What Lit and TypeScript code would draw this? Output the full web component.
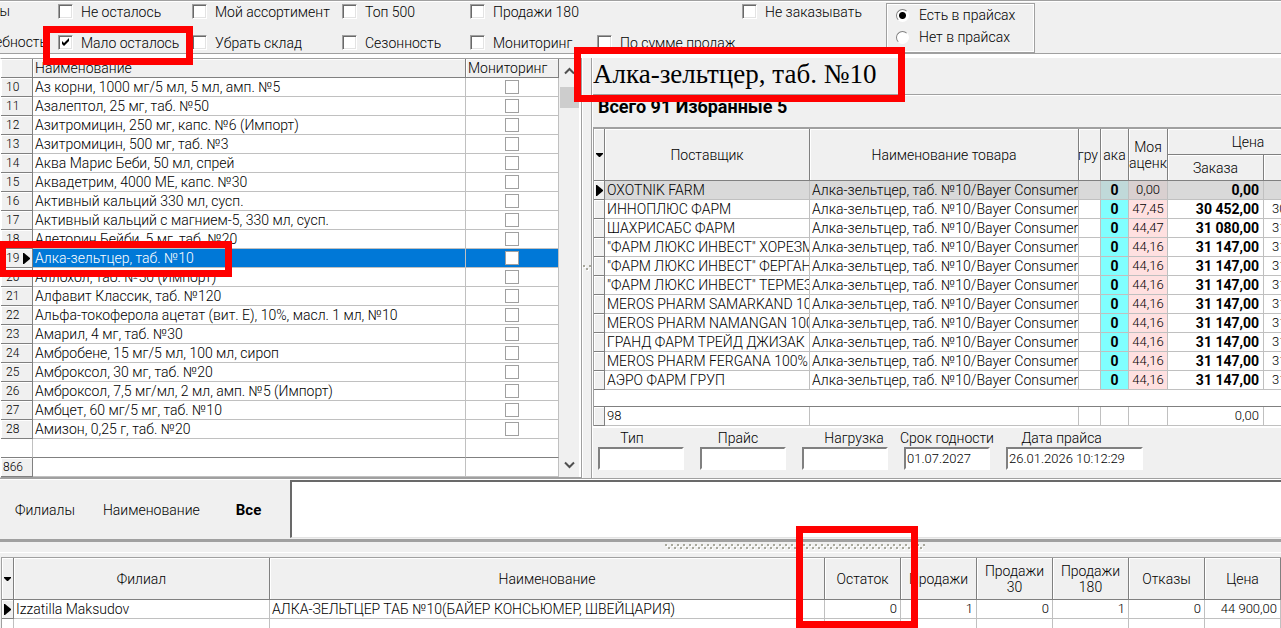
import { LitElement, html, css, svg } from "lit";
import { customElement } from "lit/decorators.js";
import { classMap } from "lit/directives/class-map.js";

const MEDICINES: string[] = [
  "Аз корни, 1000 мг/5 мл, 5 мл, амп. №5",
  "Азалептол, 25 мг, таб. №50",
  "Азитромицин, 250 мг, капс. №6 (Импорт)",
  "Азитромицин, 500 мг, таб. №3",
  "Аква Марис Беби, 50 мл, спрей",
  "Аквадетрим, 4000 МЕ, капс. №30",
  "Активный кальций 330 мл, сусп.",
  "Активный кальций с магнием-5, 330 мл, сусп.",
  "Алеторин Бейби, 5 мг, таб. №20",
  "Алка-зельтцер, таб. №10",
  "Аллохол, таб. №50 (Импорт)",
  "Алфавит Классик, таб. №120",
  "Альфа-токоферола ацетат (вит. Е), 10%, масл. 1 мл, №10",
  "Амарил, 4 мг, таб. №30",
  "Амбробене, 15 мг/5 мл, 100 мл, сироп",
  "Амброксол, 30 мг, таб. №20",
  "Амброксол, 7,5 мг/мл, 2 мл, амп. №5 (Импорт)",
  "Амбцет, 60 мг/5 мг, таб. №10",
  "Амизон, 0,25 г, таб. №20",
];
const FIRST_NUMBER = 10;
const CURRENT_NUMBER = 19;

const OFFERS: [string, string, string, string][] = [
  ["OXOTNIK FARM", "0,00", "0,00", ""],
  ["ИННОПЛЮС ФАРМ", "47,45", "30 452,00", "30 452,00"],
  ["ШАХРИСАБС ФАРМ", "44,47", "31 080,00", "31 080,00"],
  ['"ФАРМ ЛЮКС ИНВЕСТ" ХОРЕЗМ', "44,16", "31 147,00", "31 147,00"],
  ['"ФАРМ ЛЮКС ИНВЕСТ" ФЕРГАНА', "44,16", "31 147,00", "31 147,00"],
  ['"ФАРМ ЛЮКС ИНВЕСТ" ТЕРМЕЗ', "44,16", "31 147,00", "31 147,00"],
  ["MEROS PHARM SAMARKAND 100%", "44,16", "31 147,00", "31 147,00"],
  ["MEROS PHARM NAMANGAN 100%", "44,16", "31 147,00", "31 147,00"],
  ["ГРАНД ФАРМ ТРЕЙД ДЖИЗАК", "44,16", "31 147,00", "31 147,00"],
  ["MEROS PHARM FERGANA 100%", "44,16", "31 147,00", "31 147,00"],
  ["АЭРО ФАРМ ГРУП", "44,16", "31 147,00", "31 147,00"],
];
const PRODUCT = "Алка-зельтцер, таб. №10/Bayer Consumer";

const base = css`
  :host {
    display: block;
    min-width: 0;
    font-family: Roboto, "Liberation Sans", sans-serif;
    font-size: 14px;
    font-weight: 300;
    line-height: 16px;
    color: #000;
  }
  * { box-sizing: border-box; }
  table {
    border-collapse: separate;
    border-spacing: 0;
    table-layout: fixed;
    width: 100%;
    background: #fff;
  }
  th, td {
    height: 19px;
    padding: 0 2px;
    line-height: 18px;
    text-align: left;
    font-weight: 300;
    white-space: nowrap;
    overflow: hidden;
    border: 0 solid #c0c0c0;
    border-width: 0 1px 1px 0;
  }
  th {
    background: #f0f0f0;
    border-color: #808080;
    box-shadow: inset 1px 1px #fff;
  }
  thead th { text-align: center; line-height: 16px; }
  .num { text-align: right; }
  svg { display: block; }
`;

const marker = svg`<path d="M0 0h1l6 5v1l-6 5H0z" fill="#000"/>`;
const currentMark = html`<svg width="7" height="11" viewBox="0 0 7 11">${marker}</svg>`;
const dropMark = html`<svg width="7" height="4" viewBox="0 0 7 4"><path d="M0 0h7v1L4 4H3L0 1z" /></svg>`;

@customElement("filter-bar")
class FilterBar extends LitElement {
  static styles = [base, css`
    .bar {
      display: flex;
      height: 54px;
      background: #f0f0f0;
      border-top: 1px solid #a0a0a0;
      border-bottom: 1px solid #a0a0a0;
      box-shadow: inset 0 1px #fff;
    }
    .filters {
      display: grid;
      grid-template: 15px 15px / 58px 134px 150px 128px 127px 145px 144px;
      row-gap: 16px;
      padding-top: 3px;
    }
    .check, .clip { display: flex; align-items: center; gap: 8px; white-space: nowrap; }
    .clip { justify-content: flex-end; overflow: hidden; line-height: 15px; }
    .clip.short { padding-right: 48px; }
    .clip.long { padding-right: 11px; }
    input { appearance: none; margin: 0; flex: none; background: #fff; }
    .check input {
      width: 15px;
      height: 15px;
      border: 1px solid;
      border-color: #a0a0a0 #fff #fff #a0a0a0;
      box-shadow: inset 1px 1px #696969, inset -1px -1px #e3e3e3;
    }
    .check input:checked {
      background: #fff
        url('data:image/svg+xml,<svg xmlns="http://www.w3.org/2000/svg" width="13" height="13"><path d="M3 5l2 2 5-5v3L5 10 3 8z"/></svg>')
        0 0 no-repeat;
    }
    fieldset {
      width: 149px;
      height: 50px;
      margin: 2px 0 0;
      padding: 0 0 0 9px;
      border: 1px solid #a0a0a0;
      box-shadow: inset 1px 1px #fff, inset -1px -1px #fff;
    }
    .radio { display: flex; align-items: center; gap: 10px; height: 22px; white-space: nowrap; }
    .radio input {
      width: 13px;
      height: 13px;
      border: 1px solid;
      border-color: #808080 #fff #fff #808080;
      border-radius: 50%;
    }
    .radio input:checked { background: radial-gradient(circle, #000 3px, #fff 4px); }
  `];
  check(name: string, checked = false) {
    return html`<label class="check"><input type="checkbox" .checked=${checked} />${name}</label>`;
  }
  render() {
    return html`<div class="bar">
      <div class="filters">
        <span class="clip short">ы</span>
        ${["Не осталось", "Мой ассортимент", "Топ 500", "Продажи 180"].map((n) => this.check(n))}
        <span></span>
        ${this.check("Не заказывать")}
        <span class="clip long">ебность</span>
        ${this.check("Мало осталось", true)}
        ${["Убрать склад", "Сезонность", "Мониторинг", "По сумме продаж"].map((n) => this.check(n))}
      </div>
      <fieldset>
        <label class="radio"><input type="radio" name="prices" .checked=${true} />Есть в прайсах</label>
        <label class="radio"><input type="radio" name="prices" />Нет в прайсах</label>
      </fieldset>
    </div>`;
  }
}

@customElement("medicine-list")
class MedicineList extends LitElement {
  static styles = [base, css`
    .pane {
      display: grid;
      grid-template-columns: minmax(0, 1fr) 22px;
      border: 1px solid #a0a0a0;
      border-left-color: #fff;
      height: 100%;
      background: #f0f0f0;
    }
    .idx { width: 32px; }
    .mon { width: 93px; }
    thead th { text-align: left; }
    tbody th { padding: 0 0 0 5px; font-size: 12px; }
    tfoot th { padding: 0 0 0 2px; font-size: 12px; }
    .mark { display: flex; align-items: center; gap: 4px; }
    .box { padding: 0; text-align: center; }
    .box input {
      appearance: none;
      display: block;
      width: 14px;
      height: 14px;
      margin: 0 auto;
      border: 1px solid #a0a0a0;
      background: #fff;
    }
    .current td { background: #0078d7; color: #fff; }
    .blank td { border-bottom-color: #808080; }
    .scroll {
      display: flex;
      flex-direction: column;
      align-items: center;
      border-right: 2px solid #fff;
    }
    .scroll svg { flex: none; margin: 8px 0; }
    .thumb { width: 19px; height: 21px; background: #cdcdcd; margin-top: 4px; }
    .scroll .down { margin-top: auto; }
  `];
  render() {
    return html`<div class="pane">
      <div>
        <table>
          <colgroup><col class="idx" /><col /><col class="mon" /></colgroup>
          <thead><tr><th></th><th scope="col">Наименование</th><th scope="col">Мониторинг</th></tr></thead>
          <tbody>
            ${MEDICINES.map((name, i) => {
              const n = FIRST_NUMBER + i;
              const current = n === CURRENT_NUMBER;
              return html`<tr class=${classMap({ current })}>
                <th scope="row"><span class="mark">${n}${current ? currentMark : ""}</span></th>
                <td>${name}</td>
                <td class="box"><input type="checkbox" aria-label=${"Мониторинг: " + name} /></td>
              </tr>`;
            })}
            <tr class="blank"><td></td><td></td><td></td></tr>
          </tbody>
          <tfoot><tr><th scope="row">866</th><td></td><td></td></tr></tfoot>
        </table>
      </div>
      <div class="scroll">
        <svg width="11" height="8" viewBox="0 0 11 8"><path d="M1 6.5 5.5 2 10 6.5" fill="none" stroke="#505050" stroke-width="2" /></svg>
        <div class="thumb"></div>
        <svg class="down" width="11" height="8" viewBox="0 0 11 8"><path d="M1 1.5 5.5 6 10 1.5" fill="none" stroke="#505050" stroke-width="2" /></svg>
      </div>
    </div>`;
  }
}

@customElement("offer-panel")
class OfferPanel extends LitElement {
  static styles = [base, css`
    .pane { background: #f0f0f0; border-left: 1px solid #fff; height: 100%; overflow: hidden; }
    h1 {
      height: 37px;
      margin: 0;
      border-bottom: 1px solid #a0a0a0;
      font: 400 27px/32px "Liberation Serif", serif;
      white-space: nowrap;
    }
    h2 {
      height: 32px;
      margin: 0;
      padding: 0 5px;
      box-shadow: inset 0 1px #fff;
      font: 700 18px/23px Roboto, "Liberation Sans", sans-serif;
    }
    .wide { width: 736px; border-top: 2px solid #a0a0a0; border-left: 1px solid #a0a0a0; }
    .c-ind { width: 11px; }
    .c-sup { width: 205px; }
    .c-name { width: 269px; }
    .c-grp { width: 22px; }
    .c-ord { width: 28px; }
    .c-mark { width: 39px; }
    .c-price { width: 96px; }
    thead th { height: 26px; padding: 0; }
    .ind { padding: 0; }
    .ind svg { margin: 0 auto; }
    .spill { display: flex; justify-content: center; overflow: hidden; }
    .spill.end { justify-content: flex-end; padding-right: 2px; }
    .item { padding-right: 0; }
    .qty { background: #80ffff; font-weight: 700; text-align: center; }
    .own { background: #ffe0e0; text-align: center; font-size: 13px; }
    .cost { font-weight: 700; padding-right: 4px; text-align: right; }
    .next { padding-left: 8px; font-size: 13px; }
    .current td { background: #d9d9d9; }
    .current .qty { background: #c0d9d9; }
    .current .own { background: #d9d0d0; }
    .blank td { height: 17px; border-right: 0; border-color: #808080; }
    tfoot td { font-size: 13px; }
    tfoot .num { padding-right: 4px; }
    .fields { display: flex; gap: 16px; padding: 2px 5px 8px; border-top: 2px solid #fff; }
    .field { display: flex; flex-direction: column; align-items: center; width: 86px; white-space: nowrap; }
    .field.stamp { width: 137px; }
    .field label { margin-bottom: 1px; }
    .field.left label { padding-right: 18px; }
    .field.mid label { padding-right: 10px; }
    .field.right label { padding-left: 18px; }
    .field.stamp label { padding-right: 26px; }
    .field input {
      width: 100%;
      height: 23px;
      padding: 0 1px;
      border: 2px solid;
      border-color: #808080 #fff #fff #808080;
      border-radius: 0;
      background: #fff;
      font: 300 13px Roboto, "Liberation Sans", sans-serif;
    }
  `];
  field(id: string, label: string, value = "", cls = "") {
    return html`<div class="field ${cls}"><label for=${id}>${label}</label><input id=${id} type="text" .value=${value} /></div>`;
  }
  render() {
    return html`<div class="pane">
      <h1>Алка-зельтцер, таб. №10</h1>
      <h2>Всего 91 Избранные 5</h2>
      <div class="wide">
        <table>
          <colgroup>
            <col class="c-ind" /><col class="c-sup" /><col class="c-name" /><col class="c-grp" />
            <col class="c-ord" /><col class="c-mark" /><col class="c-price" /><col />
          </colgroup>
          <thead>
            <tr>
              <th rowspan="2" class="ind">${dropMark}</th>
              <th rowspan="2" scope="col">Поставщик</th>
              <th rowspan="2" scope="col">Наименование товара</th>
              <th rowspan="2" scope="col"><span class="spill end">гру</span></th>
              <th rowspan="2" scope="col"><span class="spill">ака</span></th>
              <th rowspan="2" scope="col"><span class="spill">Моя</span><span class="spill">аценк</span></th>
              <th colspan="2" scope="colgroup">Цена</th>
            </tr>
            <tr><th scope="col">Заказа</th><th></th></tr>
          </thead>
          <tbody>
            ${OFFERS.map(([supplier, own, cost, next], i) => html`<tr class=${classMap({ current: i === 0 })}>
              <th class="ind">${i === 0 ? currentMark : ""}</th>
              <td>${supplier}</td>
              <td class="item">${PRODUCT}</td>
              <td></td>
              <td class="qty">0</td>
              <td class="own">${own}</td>
              <td class="cost">${cost}</td>
              <td class="next">${next}</td>
            </tr>`)}
            <tr class="blank"><td colspan="8"></td></tr>
          </tbody>
          <tfoot>
            <tr><th></th><td>98</td><td></td><td></td><td></td><td></td><td class="num">0,00</td><td></td></tr>
          </tfoot>
        </table>
      </div>
      <div class="fields">
        ${this.field("type", "Тип", "", "left")}
        ${this.field("price", "Прайс", "", "mid")}
        ${this.field("load", "Нагрузка", "", "right")}
        ${this.field("expiry", "Срок годности", "01.07.2027")}
        ${this.field("date", "Дата прайса", "26.01.2026 10:12:29", "stamp")}
      </div>
    </div>`;
  }
}

@customElement("branch-table")
class BranchTable extends LitElement {
  static styles = [base, css`
    .frame { margin-left: 1px; border-top: 1px solid #a0a0a0; border-left: 1px solid #a0a0a0; }
    .c-ind { width: 12px; }
    .c-branch { width: 256px; }
    .c-num { width: 76px; }
    thead th { height: 42px; padding: 0 4px; white-space: normal; }
    .ind { padding: 0; }
    .ind svg { margin: 0 auto; }
    td.num { font-size: 13px; padding-right: 3px; }
  `];
  render() {
    const heads = ["Остаток", "Продажи", "Продажи 30", "Продажи 180", "Отказы", "Цена"];
    const values = ["0", "1", "0", "1", "0", "44 900,00"];
    return html`<div class="frame"><table>
      <colgroup>
        <col class="c-ind" /><col class="c-branch" /><col />
        ${heads.map(() => html`<col class="c-num" />`)}
      </colgroup>
      <thead><tr>
        <th class="ind">${dropMark}</th><th scope="col">Филиал</th><th scope="col">Наименование</th>
        ${heads.map((h) => html`<th scope="col">${h}</th>`)}
      </tr></thead>
      <tbody>
        <tr>
          <th class="ind">${currentMark}</th>
          <td>Izzatilla Maksudov</td>
          <td>АЛКА-ЗЕЛЬТЦЕР ТАБ №10(БАЙЕР КОНСЬЮМЕР, ШВЕЙЦАРИЯ)</td>
          ${values.map((v) => html`<td class="num">${v}</td>`)}
        </tr>
        <tr><td></td><td></td><td></td>${values.map(() => html`<td></td>`)}</tr>
      </tbody>
    </table></div>`;
  }
}

@customElement("app-root")
class AppRoot extends LitElement {
  static styles = [base, css`
    :host { position: relative; height: 100vh; overflow: hidden; background: #f0f0f0; }
    .work {
      display: grid;
      grid-template-columns: 582px 10px minmax(0, 1fr);
      border-top: 4px solid #fff;
      border-bottom: 1px solid #a0a0a0;
    }
    .split { display: flex; align-items: center; justify-content: center; border-left: 1px solid #fff; border-right: 1px solid #a0a0a0; }
    .totals {
      display: grid;
      grid-template-columns: 290px minmax(0, 1fr);
      height: 63px;
      border-top: 1px solid #fff;
      border-bottom: 3px solid #a0a0a0;
    }
    .names { display: flex; align-items: center; gap: 28px; padding-left: 15px; }
    .all { padding-left: 8px; font-size: 15px; font-weight: 700; }
    textarea {
      display: block;
      width: 100%;
      height: 58px;
      border: 2px solid #696969;
      border-width: 2px 0 1px 2px;
      border-bottom-color: #e3e3e3;
      background: #fff;
      resize: none;
    }
    .grip { display: flex; justify-content: center; height: 15px; padding: 2px 0 0 308px; box-shadow: inset 0 -4px #f0f0f0, inset 0 -5px #fff; }
    .note { position: absolute; border: 7px solid #f00; pointer-events: none; }
    .note-filter { left: 43px; top: 26px; width: 150px; height: 39px; }
    .note-title { left: 574px; top: 47px; width: 331px; height: 55px; }
    .note-row { left: -1px; top: 241px; width: 233px; height: 36px; }
    .note-stock { left: 796px; top: 526px; width: 122px; height: 102px; }
  `];
  grip(width: number) {
    return html`<svg width=${width} height="6">
      <defs><pattern id="dots" width="6" height="6" patternUnits="userSpaceOnUse">
        <path d="M1 1h2v2H1zM4 4h2v2H4z" fill="#fff" /><path d="M0 0h2v2H0zM3 3h2v2H3z" fill="#a8a89c" />
      </pattern></defs>
      <rect width=${width} height="6" fill="url(#dots)" />
    </svg>`;
  }
  render() {
    return html`
      <filter-bar></filter-bar>
      <div class="work">
        <medicine-list></medicine-list>
        <div class="split">${this.grip(8)}</div>
        <offer-panel></offer-panel>
      </div>
      <div class="totals">
        <div class="names"><span>Филиалы</span><span>Наименование</span><b class="all">Все</b></div>
        <textarea aria-label="Все"></textarea>
      </div>
      <div class="grip">${this.grip(260)}</div>
      <branch-table></branch-table>
      <div class="note note-filter"></div>
      <div class="note note-title"></div>
      <div class="note note-row"></div>
      <div class="note note-stock"></div>
    `;
  }
}
